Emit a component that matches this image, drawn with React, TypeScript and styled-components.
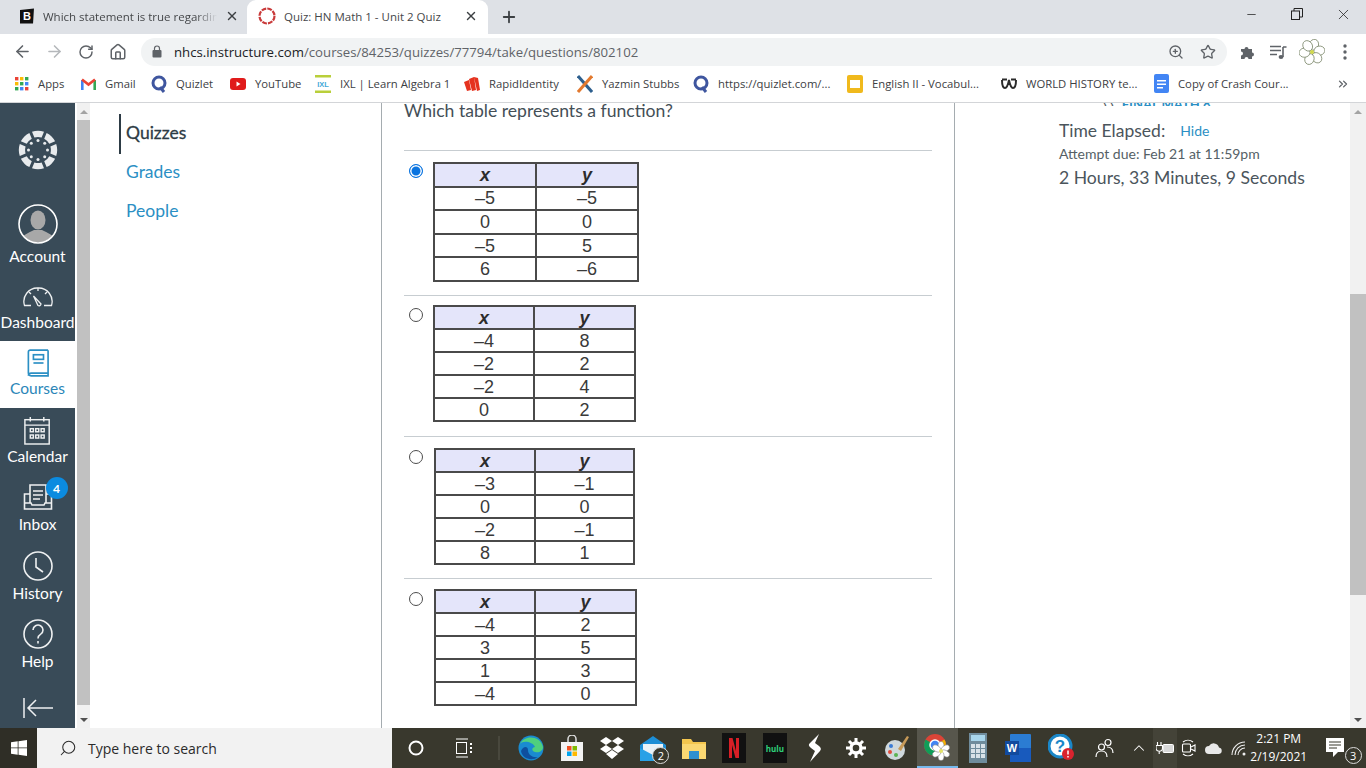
import styled, { createGlobalStyle } from "styled-components"
import { ArrowLeft, ArrowRight, RotateCw, Home, Plus, X, Minus, ZoomIn, Star, Search, ChevronUp, ChevronsRight } from "lucide-react"

const GlobalStyle = createGlobalStyle`
  html, body { margin: 0; padding: 0; width: 1366px; height: 768px; overflow: hidden; background: #fff; }
  * { box-sizing: border-box; }
`

const Page = styled.div`
  width: 1366px;
  height: 768px;
  display: flex;
  flex-direction: column;
  font-family: "Lato", "Open Sans", sans-serif;
  overflow: hidden;
`

/* browser chrome */
const TabStrip = styled.div`
  height: 34px;
  background: #dee1e6;
  display: flex;
  align-items: stretch;
  padding-left: 8px;
  font-family: "Open Sans", "Noto Sans", sans-serif;
`
const Tab = styled.div<{ $active?: boolean; $w: number }>`
  width: ${p => p.$w}px;
  display: flex;
  align-items: center;
  padding: 0 0 2px 11px;
  background: ${p => (p.$active ? "#fff" : "transparent")};
  border-radius: 9px 9px 0 0;
`
const TabTitle = styled.span<{ $w: number; $fade?: boolean }>`
  width: ${p => p.$w}px;
  margin-left: 8px;
  font-size: 11.5px;
  color: #45474a;
  white-space: nowrap;
  overflow: hidden;
  ${p => p.$fade && "-webkit-mask-image: linear-gradient(to right, #000 88%, transparent);"}
`
const TabClose = styled.span<{ $ml: number }>`
  margin-left: ${p => p.$ml}px;
  display: flex;
  color: #3c4043;
`
const NewTab = styled.span`
  margin-left: 12px;
  display: flex;
  align-items: center;
  color: #3c4043;
`
const WindowButtons = styled.div`
  margin-left: auto;
  display: flex;
  align-items: flex-start;
  color: #222;
`
const WindowButton = styled.span`
  width: 46px;
  height: 28px;
  display: flex;
  align-items: center;
  justify-content: center;
`

const Toolbar = styled.div`
  height: 35px;
  background: #fff;
  display: flex;
  align-items: center;
  padding-left: 6px;
`
const NavButton = styled.span<{ $off?: boolean }>`
  width: 32px;
  display: flex;
  justify-content: center;
  color: ${p => (p.$off ? "#b5b8bb" : "#5f6368")};
`
const Omnibox = styled.div`
  width: 1086px;
  height: 28px;
  margin-left: 7px;
  border-radius: 14px;
  background: #f1f3f4;
  display: flex;
  align-items: center;
  padding-left: 10px;
  font-family: "Open Sans", "Noto Sans", sans-serif;
  font-size: 13.2px;
  color: #5f6368;
`
const Host = styled.span`
  color: #202124;
  margin-left: 11px;
`
const OmniIcons = styled.span`
  margin-left: auto;
  display: flex;
  gap: 16px;
  padding: 0 11px 0 0;
  color: #5f6368;
`
const ToolIcons = styled.div`
  display: flex;
  align-items: center;
  color: #5f6368;
  margin-left: 13px;
  gap: 14px;
`
const ProfileSlot = styled.span`
  display: flex;
  margin: 0 4px 0 -2px;
`

const Bookmarks = styled.div`
  height: 34px;
  background: #fff;
  display: flex;
  align-items: center;
  padding: 0 0 4px 15px;
  border-bottom: 1px solid #d3d5d8;
  font-family: "Open Sans", "Noto Sans", sans-serif;
  font-size: 11.3px;
  color: #3c4043;
`
const Bookmark = styled.div<{ $w: number }>`
  width: ${p => p.$w}px;
  display: flex;
  align-items: center;
  gap: 9px;
  white-space: nowrap;
  overflow: hidden;
`
const BookmarkMore = styled.span`
  margin-left: auto;
  margin-right: 16px;
  display: flex;
  color: #5f6368;
`

/* canvas page */
const Main = styled.div`
  height: 625px;
  display: flex;
  background: #fff;
  overflow: hidden;
`
const GlobalNav = styled.nav`
  width: 75px;
  background: #394b58;
  display: flex;
  flex-direction: column;
  align-items: center;
  color: #fff;
  font-size: 15.5px;
`
const LogoSlot = styled.div`
  height: 99px;
  width: 100%;
  display: flex;
  justify-content: center;
  padding-top: 27px;
`
const NavItem = styled.div<{ $h: number; $pt: number; $active?: boolean }>`
  width: 100%;
  height: ${p => p.$h}px;
  display: flex;
  flex-direction: column;
  align-items: center;
  background: ${p => (p.$active ? "#fff" : "transparent")};
  color: ${p => (p.$active ? "#2b86b8" : "#fff")};
  padding-top: ${p => p.$pt}px;
  white-space: nowrap;
`
const NavIcon = styled.div<{ $h: number }>`
  position: relative;
  height: ${p => p.$h}px;
  display: flex;
  align-items: center;
  justify-content: center;
`
const NavLabel = styled.span`
  line-height: 20px;
`
const Badge = styled.span`
  position: absolute;
  top: -3px;
  right: -15px;
  width: 22px;
  height: 22px;
  border-radius: 50%;
  background: #0b8be0;
  color: #fff;
  font-size: 12px;
  font-weight: 700;
  display: flex;
  align-items: center;
  justify-content: center;
`
const Collapse = styled.div`
  margin-top: auto;
  height: 41px;
  display: flex;
  align-items: center;
`
const Scrollbar = styled.div<{ $w: number; $ml?: number }>`
  width: ${p => p.$w}px;
  margin-left: ${p => p.$ml ?? 0}px;
  flex: none;
  background: #f1f1f1;
  display: flex;
  flex-direction: column;
  align-items: center;
`
const ScrollArrow = styled.div<{ $down?: boolean }>`
  height: 17px;
  display: flex;
  align-items: center;
  &::after {
    content: "";
    border-left: 4px solid transparent;
    border-right: 4px solid transparent;
    ${p => (p.$down ? "border-top: 4px solid #505050;" : "border-bottom: 4px solid #a3a3a3;")}
  }
`
const ScrollTrack = styled.div`
  flex: 1;
  width: 100%;
  display: flex;
  flex-direction: column;
`
const ScrollThumb = styled.div<{ $before: number; $h: number }>`
  margin-top: ${p => p.$before}px;
  height: ${p => p.$h}px;
  background: #c1c1c1;
`

const CourseNav = styled.aside`
  width: 291px;
  flex: none;
  padding: 11px 0 0 29px;
  font-size: 17.5px;
`
const CourseLink = styled.div<{ $current?: boolean }>`
  height: ${p => (p.$current ? 40 : 39)}px;
  display: flex;
  align-items: center;
  padding: 0 0 4px 5px;
  border-left: 2px solid ${p => (p.$current ? "#2d3b45" : "transparent")};
  color: ${p => (p.$current ? "#2d3b45" : "#2b8fc4")};
  -webkit-text-stroke: ${p => (p.$current ? "0.3px" : "0")};
`
const Content = styled.main`
  width: 574px;
  flex: none;
  border-left: 1px solid #a5acb0;
  border-right: 1px solid #a5acb0;
  padding: 0 22px;
`
const Question = styled.div`
  height: 48px;
  font-size: 17.6px;
  line-height: 15px;
  color: #444f57;
  border-bottom: 1px solid #c7cdd1;
`
const Answer = styled.div<{ $rule?: boolean; $top: number; $bottom: number }>`
  display: flex;
  align-items: flex-start;
  padding: ${p => p.$top}px 0 ${p => p.$bottom}px 5px;
  border-top: ${p => (p.$rule ? "1px solid #c7cdd1" : "0")};
`
const Radio = styled.input<{ $nudge: number }>`
  appearance: none;
  margin: ${p => p.$nudge}px 10px 0 0;
  width: 14px;
  height: 14px;
  border-radius: 50%;
  border: 1px solid #4d4d4d;
  background: #fff;
  flex: none;
  &:checked {
    border: 1.5px solid #0a74e0;
    background: #0a74e0;
    box-shadow: inset 0 0 0 1.5px #fff;
  }
`
const ValueTable = styled.table<{ $w: number; $h: number; $ml: number }>`
  width: ${p => p.$w}px;
  height: ${p => p.$h}px;
  margin-left: ${p => p.$ml}px;
  border-collapse: collapse;
  table-layout: fixed;
  font-family: "Liberation Sans", Arial, sans-serif;
  font-size: 18px;
  color: #3a3a3a;
  border: 2px solid #4a4a4a;
`
const HeadCell = styled.th<{ $w?: number }>`
  width: ${p => (p.$w ? `${p.$w}px` : "auto")};
  background: #e4e5fa;
  border: 2px solid #4a4a4a;
  padding: 0;
  font-style: italic;
  font-weight: 700;
  line-height: 18px;
  color: #2c2c2c;
`
const ValueCell = styled.td`
  border: 2px solid #4a4a4a;
  padding: 0;
  text-align: center;
  line-height: 18px;
`

const SidePanel = styled.aside`
  flex: 1;
  padding-left: 104px;
  color: #4b555c;
`
const ClippedLine = styled.div`
  height: 3px;
  padding-left: 44px;
  overflow: hidden;
  display: flex;
  align-items: flex-end;
  gap: 8px;
  color: #2b8fc4;
  font-size: 13px;
  font-weight: 700;
  line-height: 3px;
  white-space: nowrap;
`
const ClippedMark = styled.span`
  color: #555f66;
`
const TimeRow = styled.div`
  margin-top: 13px;
  height: 22px;
  display: flex;
  align-items: center;
  font-size: 17.5px;
`
const HideLink = styled.span`
  margin-left: 15px;
  font-size: 14px;
  color: #2b8fc4;
`
const DueLine = styled.div`
  margin-top: 3px;
  font-size: 14px;
  line-height: 20px;
  color: #555f66;
`
const Elapsed = styled.div`
  margin-top: 2px;
  font-size: 17.6px;
  line-height: 24px;
`

/* windows taskbar */
const Taskbar = styled.div`
  height: 40px;
  background: #39382d;
  display: flex;
  align-items: center;
  font-family: "Open Sans", "Noto Sans", sans-serif;
  color: #fff;
`
const StartSlot = styled.div`
  width: 37px;
  height: 100%;
  display: flex;
  align-items: center;
  justify-content: center;
  background: #2f2e26;
`
const SearchBox = styled.div`
  width: 355px;
  height: 100%;
  background: #f2f2f2;
  color: #2b2b2b;
  font-size: 14px;
  display: flex;
  align-items: center;
  gap: 11px;
  padding-left: 22px;
`
const Slot = styled.div<{ $w: number; $active?: boolean; $tint?: boolean }>`
  position: relative;
  width: ${p => p.$w}px;
  height: 100%;
  flex: none;
  display: flex;
  align-items: center;
  justify-content: center;
  background: ${p => (p.$active ? "#57564c" : p.$tint ? "#444338" : "transparent")};
  border-bottom: ${p => (p.$active ? "2px solid #76b9ed" : "0")};
`
const CountBubble = styled.span`
  position: absolute;
  right: 4px;
  bottom: 4px;
  width: 17px;
  height: 17px;
  border-radius: 50%;
  border: 1px solid #ddd;
  background: #39382d;
  font-size: 11px;
  display: flex;
  align-items: center;
  justify-content: center;
`
const Clock = styled.div`
  width: 54px;
  text-align: center;
  font-size: 12px;
  line-height: 18px;
  white-space: nowrap;
  display: flex;
  flex-direction: column;
  align-items: center;
`

const CanvasLogo = () => (
  <svg width="40" height="40" viewBox="-20 -20 40 40">
    {[0, 45, 90, 135, 180, 225, 270, 315].map(a => (
      <path key={a} d="M-6 -18.200A19 19 0 0 1 6 -18.200L3.600 -12.400A13 13 0 0 0 -3.600 -12.400Z" fill="#e8ebed" transform={`rotate(${a})`} />
    ))}
    {[0, 45, 90, 135, 180, 225, 270, 315].map(a => (
      <circle key={a} r="1.500" cx={9.500 * Math.cos((a * Math.PI) / 180)} cy={9.500 * Math.sin((a * Math.PI) / 180)} fill="#e8ebed" />
    ))}
  </svg>
)
const Avatar = () => (
  <svg width="40" height="40" viewBox="0 0 40 40">
    <clipPath id="av"><circle cx="20" cy="20" r="18.500" /></clipPath>
    <circle cx="20" cy="20" r="19" fill="#394b58" />
    <g clipPath="url(#av)" fill="#a8a8a8">
      <ellipse cx="20" cy="16" rx="7.500" ry="9.500" />
      <path d="M2 40c0-9 9-11 14-14h8c5 3 14 5 14 14z" />
    </g>
    <circle cx="20" cy="20" r="19" fill="none" stroke="#fff" strokeWidth="1.600" />
  </svg>
)
const Gauge = () => (
  <svg width="30" height="20" viewBox="0 0 30 20" fill="none" stroke="#eef0f1" strokeWidth="1.300">
    <path d="M8 18.500H1.500A13.500 13.500 0 0 1 15 1a13.500 13.500 0 0 1 13.500 17.500H21" />
    <path d="M10.500 9l4.500 9.500a2 2 0 0 0 3-1.500z" />
    <path d="M15 1v3M6 5l2 2M24 5l-2 2" />
  </svg>
)
const Book = () => (
  <svg width="22" height="28" viewBox="0 0 24 30" fill="none" stroke="#2b8fc4" strokeWidth="1.800">
    <path d="M23 1H3.500A2 2 0 0 0 1.500 3v23a3 3 0 0 0 3 3H23v-3H5M23 1v25H4.500a3 3 0 0 0-3 3" />
    <rect x="7" y="6" width="11" height="5" />
    <path d="M7 15h11" />
  </svg>
)
const CalendarIcon = () => (
  <svg width="27" height="31" viewBox="0 0 30 32" fill="none" stroke="#eef0f1" strokeWidth="1.600">
    <rect x="1" y="4" width="27" height="27" />
    <path d="M1 10h27M7 1v5M22 1v5" />
    {[7, 13, 19].map(x => [14, 21].map(y => <rect key={`${x}${y}`} x={x} y={y} width="3.400" height="3.400" />))}
  </svg>
)
const InboxIcon = () => (
  <svg width="30" height="28" viewBox="0 0 30 28" fill="none" stroke="#eef0f1" strokeWidth="1.600">
    <path d="M7 20V2h16v18M10 8h10M10 12h10M10 16h7" />
    <path d="M7 11H1.500v15h27V11H23M1.500 20H8l1 2h12l1-2h6.500" />
  </svg>
)
const ClockIcon = () => (
  <svg width="30" height="30" viewBox="0 0 30 30" fill="none" stroke="#eef0f1" strokeWidth="1.600">
    <circle cx="15" cy="15" r="14" />
    <path d="M13 7v9l7 5" />
  </svg>
)
const HelpIcon = () => (
  <svg width="30" height="30" viewBox="0 0 30 30" fill="none" stroke="#eef0f1" strokeWidth="1.600">
    <circle cx="15" cy="15" r="14" />
    <path d="M10 11a5 5 0 1 1 7.500 4.400c-1.700 1-2.500 1.800-2.500 4" />
    <path d="M15 22v2.500" />
  </svg>
)
const CollapseIcon = () => (
  <svg width="32" height="22" viewBox="0 0 32 22" fill="none" stroke="#eef0f1" strokeWidth="1.500">
    <path d="M2 1v20M31 11H6M14 3l-8 8 8 8" />
  </svg>
)

const BrainlyIcon = () => (
  <svg width="16" height="16" viewBox="0 0 16 16">
    <path d="M1 2l14-1.500-1 15H1z" fill="#111" />
    <text x="8" y="12" textAnchor="middle" fontSize="11" fontWeight="700" fill="#fff" fontFamily="Liberation Sans">B</text>
  </svg>
)
const CanvasTabIcon = () => (
  <svg width="18" height="18" viewBox="0 0 18 18">
    <circle cx="9" cy="9" r="7.500" fill="none" stroke="#c93a3a" strokeWidth="2.200" strokeDasharray="4.800 1.100" />
  </svg>
)
const LockIcon = () => (
  <svg width="12" height="13" viewBox="0 0 12 13" fill="#5f6368">
    <rect x="1.500" y="5" width="9" height="7.500" rx="1" />
    <path d="M3.500 5V3.500a2.500 2.500 0 0 1 5 0V5" fill="none" stroke="#5f6368" strokeWidth="1.200" />
  </svg>
)
const PuzzleIcon = () => (
  <svg width="16" height="16" viewBox="0 0 16 16" fill="#5f6368">
    <path d="M1 5h3.500a2 2 0 1 1 4 0H12v3.500a2 2 0 1 1 0 4V15H8.500a2 2 0 1 0-4 0H1v-3.500a2 2 0 1 0 0-4z" />
  </svg>
)
const QueueIcon = () => (
  <svg width="17" height="16" viewBox="0 0 17 16" fill="none" stroke="#5f6368" strokeWidth="1.600">
    <path d="M0 2.500h11M0 6.500h11M0 10.500h7" />
    <path d="M13 3v10M13 3h3.500" />
    <ellipse cx="11" cy="13" rx="2.400" ry="2" fill="#5f6368" stroke="none" />
  </svg>
)
const Flower = ({ size = 26 }: { size?: number }) => (
  <svg width={size} height={size} viewBox="-13 -13 26 26">
    {[15, 80, 140, 200, 265, 325].map(a => (
      <ellipse key={a} cx="0" cy="-7.500" rx="4.600" ry="5.500" fill="#fff" stroke="#6d7a5a" strokeWidth="0.700" transform={`rotate(${a})`} />
    ))}
    <circle r="2" fill="#d0d84a" />
  </svg>
)
const Kebab = () => (
  <svg width="4" height="16" viewBox="0 0 4 16" fill="#5f6368">
    <circle cx="2" cy="2" r="1.700" /><circle cx="2" cy="8" r="1.700" /><circle cx="2" cy="14" r="1.700" />
  </svg>
)

const AppsIcon = () => (
  <svg width="14" height="14" viewBox="0 0 14 14">
    {[0, 5, 10].map((x, i) => [0, 5, 10].map((y, j) => (
      <rect key={`${x}${y}`} x={x} y={y} width="3.400" height="3.400" fill={["#ea4335", "#fbbc05", "#34a853", "#4285f4"][(i + j) % 4]} />
    )))}
  </svg>
)
const GmailIcon = () => (
  <svg width="15" height="12" viewBox="0 0 15 12" fill="none">
    <path d="M1.300 12V2" stroke="#4285f4" strokeWidth="2.600" />
    <path d="M13.700 12V2" stroke="#34a853" strokeWidth="2.600" />
    <path d="M1 1.500l6.500 5 6.500-5" stroke="#ea4335" strokeWidth="2.600" />
  </svg>
)
const QuizletIcon = () => (
  <svg width="16" height="18" viewBox="0 0 16 18" fill="none" stroke="#3f569f" strokeWidth="3">
    <circle cx="8" cy="8" r="6" />
    <path d="M9 12l4 5" />
  </svg>
)
const YoutubeIcon = () => (
  <svg width="16" height="12" viewBox="0 0 16 12">
    <rect width="16" height="12" rx="3" fill="#e01b1b" />
    <path d="M6.500 3.500v5l4-2.500z" fill="#fff" />
  </svg>
)
const IxlIcon = () => (
  <svg width="16" height="18" viewBox="0 0 16 18">
    <path d="M0 0h16v2.500H0zM0 15.500h16V18H0z" fill="#b9cf3a" />
    <text x="8" y="11.500" textAnchor="middle" fontSize="7.500" fontWeight="700" fill="#44a9d8" fontFamily="Liberation Sans">IXL</text>
  </svg>
)
const RapidIcon = () => (
  <svg width="16" height="16" viewBox="0 0 16 16" fill="#e5331f">
    <path d="M0 6l5-2 2 10-4 1zM5 3l5-2 2 13-4 1zM10 1l4 1 2 12-3 1z" />
  </svg>
)
const CrossIcon = () => (
  <svg width="16" height="18" viewBox="0 0 16 18" fill="none" strokeWidth="3">
    <path d="M1 1l14 16" stroke="#2d5f8e" />
    <path d="M15 1L1 17" stroke="#e2792f" />
  </svg>
)
const SlidesIcon = () => (
  <svg width="16" height="18" viewBox="0 0 16 18">
    <rect width="16" height="18" rx="2" fill="#f0b91c" />
    <rect x="3" y="5" width="10" height="8" fill="#fff" />
  </svg>
)
const WeeblyIcon = () => (
  <svg width="16" height="12" viewBox="0 0 16 12" fill="none" stroke="#2b2b2b" strokeWidth="2">
    <path d="M1 2c0 6 1 8 3 8s3-3 4-8c1 5 2 8 4 8s3-2 3-8M1 1.500h5M10 1.500h5" />
  </svg>
)
const DocsIcon = () => (
  <svg width="15" height="19" viewBox="0 0 15 19">
    <rect width="15" height="19" rx="2" fill="#4285f4" />
    <path d="M3 6h9v1.500H3zM3 9.500h9V11H3zM3 13h6v1.500H3z" fill="#fff" />
  </svg>
)

const WindowsLogo = () => (
  <svg width="16" height="16" viewBox="0 0 16 16" fill="#fff">
    <path d="M0 2.300l6.700-1V7.500H0zM7.500 1.200L16 0v7.500H7.500zM0 8.300h6.700v6.400l-6.700-1zM7.500 8.300H16V16l-8.500-1.200z" />
  </svg>
)
const TaskView = () => (
  <svg width="16" height="20" viewBox="0 0 16 20" fill="none" stroke="#fff" strokeWidth="1">
    <path d="M0 1h12M0 19h12" />
    <rect x="0.500" y="4.500" width="10" height="11" />
    <path d="M15 5v2M15 9v2M15 13v2" strokeWidth="2" />
  </svg>
)
const EdgeIcon = () => (
  <svg width="26" height="26" viewBox="0 0 26 26">
    <circle cx="13" cy="13" r="12.500" fill="#1a8bd0" />
    <path d="M2 9C6 0 22 0 25 12c0 4-4 6-8 5s-3-5 0-5C15 7 5 5 2 9z" fill="#4fd07e" />
    <path d="M10 15c0 5 5 8 10 7-7 5-16 1-17-6 2-5 7-5 7-1z" fill="#0e4f9e" />
  </svg>
)
const StoreIcon = () => (
  <svg width="22" height="26" viewBox="0 0 22 26">
    <path d="M7 7V4a4 4 0 0 1 8 0v3" fill="none" stroke="#ddd" strokeWidth="1.500" />
    <rect y="7" width="22" height="19" fill="#f3f3f3" />
    <rect x="6" y="11" width="4.500" height="4.500" fill="#f25022" />
    <rect x="11.500" y="11" width="4.500" height="4.500" fill="#7fba00" />
    <rect x="6" y="16.500" width="4.500" height="4.500" fill="#00a4ef" />
    <rect x="11.500" y="16.500" width="4.500" height="4.500" fill="#ffb900" />
  </svg>
)
const DropboxIcon = () => (
  <svg width="24" height="22" viewBox="0 0 24 22" fill="#fff">
    <path d="M6 0l6 4-6 4-6-4zM18 0l6 4-6 4-6-4zM6 8l6 4-6 4-6-4zM18 8l6 4-6 4-6-4zM12 13l6 4-6 5-6-5z" />
  </svg>
)
const MailIcon = () => (
  <svg width="26" height="26" viewBox="0 0 26 26">
    <path d="M0 10L13 1l13 9v16H0z" fill="#1d8ed6" />
    <path d="M3 9h20v7l-10 6-10-6z" fill="#e9f2f8" />
    <path d="M0 13l13 7 13-7v13H0z" fill="#29a1e6" />
  </svg>
)
const FolderIcon = () => (
  <svg width="24" height="22" viewBox="0 0 24 22">
    <path d="M0 2h9l2 3h13v17H0z" fill="#f4c64e" />
    <rect y="7" width="24" height="15" fill="#fbd872" />
    <rect x="7" y="14" width="10" height="8" fill="#2f90d0" />
  </svg>
)
const NetflixTile = () => (
  <svg width="24" height="30" viewBox="0 0 24 30">
    <rect width="24" height="30" fill="#111" />
    <path d="M7 5h3.500L14 18V5h3v20h-3.500L10 12v13H7z" fill="#d81f26" />
  </svg>
)
const HuluTile = styled.span`
  width: 24px;
  height: 30px;
  background: #111;
  color: #2fd07a;
  font-size: 8px;
  font-weight: 700;
  display: flex;
  align-items: center;
  justify-content: center;
`
const BoltIcon = () => (
  <svg width="14" height="28" viewBox="0 0 14 28" fill="#fff">
    <path d="M11 0L2 9c-2 2-1 3 1 5l4 3-5 11 10-11c1.500-2 1-3-1-5L7 9z" />
  </svg>
)
const GearIcon = () => (
  <svg width="20" height="20" viewBox="0 0 20 20" fill="none" stroke="#fff">
    <circle cx="10" cy="10" r="5" strokeWidth="3.400" />
    <path d="M10 0v4M10 16v4M0 10h4M16 10h4M3 3l3 3M14 14l3 3M17 3l-3 3M6 14l-3 3" strokeWidth="3" />
  </svg>
)
const PaletteIcon = () => (
  <svg width="26" height="26" viewBox="0 0 26 26">
    <ellipse cx="11" cy="15" rx="10" ry="10" fill="#cfd8dc" />
    <circle cx="7" cy="11" r="2" fill="#3a7bd5" />
    <circle cx="6" cy="17" r="2" fill="#e24b3a" />
    <circle cx="12" cy="20" r="2" fill="#59b353" />
    <path d="M14 14L23 1l2 1-8 14z" fill="#c79a58" />
  </svg>
)
const ChromeFlower = () => (
  <svg width="28" height="28" viewBox="0 0 28 28">
    <circle cx="12" cy="12" r="11" fill="#db4437" />
    <path d="M12 12L2.500 6.500A11 11 0 0 0 12 23z" fill="#0f9d58" />
    <path d="M12 12l9.500-5.500A11 11 0 0 1 12 23z" fill="#f4b400" />
    <circle cx="12" cy="12" r="5" fill="#4285f4" stroke="#fff" strokeWidth="1.500" />
    <g transform="translate(18 18)">
      {[0, 60, 120, 180, 240, 300].map(a => (
        <ellipse key={a} cy="-5" rx="3" ry="4.500" fill="#fff" stroke="#777" strokeWidth="0.500" transform={`rotate(${a})`} />
      ))}
      <circle r="2" fill="#e4e36a" />
    </g>
  </svg>
)
const CalcIcon = () => (
  <svg width="18" height="30" viewBox="0 0 18 30">
    <rect width="18" height="30" fill="#6f8c9c" />
    <rect x="2" y="2" width="14" height="6" fill="#a8d6ec" />
    {[2, 7, 12].map(x => [11, 16, 21].map(y => <rect key={`${x}${y}`} x={x} y={y} width="4" height="4" fill="#d8e2e8" />))}
  </svg>
)
const WordIcon = () => (
  <svg width="26" height="30" viewBox="0 0 26 30">
    <rect x="5" y="1" width="21" height="28" rx="1" fill="#2b7cd3" />
    <rect x="5" y="15" width="21" height="14" fill="#185abd" />
    <rect y="8" width="14" height="14" fill="#124a9e" />
    <text x="7" y="19" textAnchor="middle" fontSize="11" fontWeight="700" fill="#fff" fontFamily="Liberation Sans">W</text>
  </svg>
)
const HelpBadge = () => (
  <svg width="28" height="28" viewBox="0 0 28 28">
    <circle cx="12" cy="12" r="11" fill="#fff" stroke="#1a87c9" strokeWidth="3" />
    <text x="12" y="18" textAnchor="middle" fontSize="17" fontWeight="700" fill="#1a87c9" fontFamily="Liberation Sans">?</text>
    <circle cx="20" cy="20" r="6" fill="#d9232e" />
    <path d="M20 16.500v4M20 22v1.500" stroke="#fff" strokeWidth="1.500" />
  </svg>
)
const PeopleIcon = () => (
  <svg width="20" height="20" viewBox="0 0 20 20" fill="none" stroke="#fff" strokeWidth="1.200">
    <circle cx="6.500" cy="9" r="3" /><path d="M1 19c0-4 2-6 5.500-6s5.500 2 5.500 6" />
    <circle cx="13" cy="4.500" r="3" /><path d="M12 9c4 0 6 2 6 6" />
  </svg>
)
const BatteryPlug = () => (
  <svg width="18" height="14" viewBox="0 0 18 14" fill="none" stroke="#fff">
    <path d="M1.500 1v3.500M5 1v3.500M0 4.500h6.500V7a3 3 0 0 1-6.500 0zM3.200 10v3" strokeWidth="1.100" />
    <rect x="7" y="3.500" width="10.500" height="8" rx="1" fill="#d8d8d8" />
  </svg>
)
const CamTray = () => (
  <svg width="16" height="20" viewBox="0 0 16 20" fill="none" stroke="#fff" strokeWidth="1.100">
    <path d="M2 4a8 8 0 0 1 10 0M2 16a8 8 0 0 0 10 0" />
    <rect x="1.500" y="6" width="8" height="8" rx="1" />
    <path d="M10 9l4-2v6l-4-2" />
  </svg>
)
const CloudTray = () => (
  <svg width="18" height="12" viewBox="0 0 18 12" fill="#e8e8e8">
    <path d="M4 12a4 4 0 0 1 0-8 5.500 5.500 0 0 1 10 1.500A3.300 3.300 0 0 1 14 12z" />
  </svg>
)
const WifiTray = () => (
  <svg width="16" height="16" viewBox="0 0 16 16" fill="none" stroke="#eee" strokeWidth="1.100">
    <path d="M1 15A13 13 0 0 1 14 2M4 15A10 10 0 0 1 14 5M7 15a7 7 0 0 1 7-7" />
    <circle cx="13" cy="14" r="1.500" fill="#eee" stroke="none" />
  </svg>
)
const NoteIcon = () => (
  <svg width="20" height="20" viewBox="0 0 20 20" fill="#fff">
    <path d="M0 0h18v14h-6l-5 5v-5H0z" />
    <path d="M3 4h12M3 7h12M3 10h8" stroke="#39382d" />
  </svg>
)

type TableRow = [string, string]

const tables: { w: number; h: number; split: number; ml: number; top: number; bottom: number; nudge: number; rows: TableRow[] }[] = [
  { w: 206, h: 120, split: 102, ml: 0, top: 11, bottom: 13, nudge: 2, rows: [["–5", "–5"], ["0", "0"], ["–5", "5"], ["6", "–6"]] },
  { w: 203, h: 117, split: 100, ml: 0, top: 9, bottom: 14, nudge: 3, rows: [["–4", "8"], ["–2", "2"], ["–2", "4"], ["0", "2"]] },
  { w: 201, h: 117, split: 100, ml: 1, top: 11, bottom: 13, nudge: 2, rows: [["–3", "–1"], ["0", "0"], ["–2", "–1"], ["8", "1"]] },
  { w: 203, h: 117, split: 100, ml: 1, top: 10, bottom: 14, nudge: 3, rows: [["–4", "2"], ["3", "5"], ["1", "3"], ["–4", "0"]] },
]

const bookmarks = [
  { w: 66, icon: <AppsIcon />, label: "Apps" },
  { w: 70, icon: <GmailIcon />, label: "Gmail" },
  { w: 79, icon: <QuizletIcon />, label: "Quizlet" },
  { w: 85, icon: <YoutubeIcon />, label: "YouTube" },
  { w: 149, icon: <IxlIcon />, label: "IXL | Learn Algebra 1" },
  { w: 113, icon: <RapidIcon />, label: "RapidIdentity" },
  { w: 116, icon: <CrossIcon />, label: "Yazmin Stubbs" },
  { w: 154, icon: <QuizletIcon />, label: "https://quizlet.com/..." },
  { w: 154, icon: <SlidesIcon />, label: "English II - Vocabul..." },
  { w: 153, icon: <WeeblyIcon />, label: "WORLD HISTORY te..." },
  { w: 135, icon: <DocsIcon />, label: "Copy of Crash Cour..." },
]

const taskApps = [
  <EdgeIcon />, <StoreIcon />, <DropboxIcon />, <MailIcon />, <FolderIcon />, <NetflixTile />,
  <HuluTile>hulu</HuluTile>, <BoltIcon />, <GearIcon />, <PaletteIcon />, <ChromeFlower />, <CalcIcon />, <WordIcon />,
]

export default function App() {
  return (
    <Page>
      <GlobalStyle />
      <TabStrip>
        <Tab $w={239}>
          <BrainlyIcon />
          <TabTitle $w={174} $fade>Which statement is true regarding</TabTitle>
          <TabClose $ml={8}><X size={14} strokeWidth={2.4} /></TabClose>
        </Tab>
        <Tab $w={241} $active>
          <CanvasTabIcon />
          <TabTitle $w={166}>Quiz: HN Math 1 - Unit 2 Quiz</TabTitle>
          <TabClose $ml={14}><X size={14} strokeWidth={2.4} /></TabClose>
        </Tab>
        <NewTab><Plus size={18} strokeWidth={2.4} /></NewTab>
        <WindowButtons>
          <WindowButton><Minus size={13} strokeWidth={1.4} /></WindowButton>
          <WindowButton>
            <svg width="12" height="12" viewBox="0 0 12 12" fill="none" stroke="#222">
              <rect x="0.500" y="3" width="8" height="8.500" />
              <path d="M3 3V0.500h8.500V9H8.500" />
            </svg>
          </WindowButton>
          <WindowButton><X size={17} strokeWidth={1.1} /></WindowButton>
        </WindowButtons>
      </TabStrip>

      <Toolbar>
        <NavButton><ArrowLeft size={19} strokeWidth={2} /></NavButton>
        <NavButton $off><ArrowRight size={19} strokeWidth={2} /></NavButton>
        <NavButton><RotateCw size={16} strokeWidth={2.2} /></NavButton>
        <NavButton><Home size={18} strokeWidth={2} /></NavButton>
        <Omnibox>
          <LockIcon />
          <Host>nhcs.instructure.com</Host>/courses/84253/quizzes/77794/take/questions/802102
          <OmniIcons>
            <ZoomIn size={16} strokeWidth={2} />
            <Star size={16} strokeWidth={2} />
          </OmniIcons>
        </Omnibox>
        <ToolIcons>
          <PuzzleIcon />
          <QueueIcon />
          <ProfileSlot><Flower /></ProfileSlot>
          <Kebab />
        </ToolIcons>
      </Toolbar>

      <Bookmarks>
        {bookmarks.map(b => (
          <Bookmark key={b.label} $w={b.w}>{b.icon}{b.label}</Bookmark>
        ))}
        <BookmarkMore><ChevronsRight size={14} strokeWidth={2.2} /></BookmarkMore>
      </Bookmarks>

      <Main>
        <GlobalNav>
          <LogoSlot><CanvasLogo /></LogoSlot>
          <NavItem $h={66} $pt={0}>
            <NavIcon $h={44}><Avatar /></NavIcon>
            <NavLabel>Account</NavLabel>
          </NavItem>
          <NavItem $h={73} $pt={14}>
            <NavIcon $h={30}><Gauge /></NavIcon>
            <NavLabel>Dashboard</NavLabel>
          </NavItem>
          <NavItem $h={67} $pt={7} $active>
            <NavIcon $h={30}><Book /></NavIcon>
            <NavLabel>Courses</NavLabel>
          </NavItem>
          <NavItem $h={68} $pt={6}>
            <NavIcon $h={32}><CalendarIcon /></NavIcon>
            <NavLabel>Calendar</NavLabel>
          </NavItem>
          <NavItem $h={69} $pt={4}>
            <NavIcon $h={34}><InboxIcon /><Badge>4</Badge></NavIcon>
            <NavLabel>Inbox</NavLabel>
          </NavItem>
          <NavItem $h={68} $pt={4}>
            <NavIcon $h={34}><ClockIcon /></NavIcon>
            <NavLabel>History</NavLabel>
          </NavItem>
          <NavItem $h={68} $pt={4}>
            <NavIcon $h={34}><HelpIcon /></NavIcon>
            <NavLabel>Help</NavLabel>
          </NavItem>
          <Collapse><CollapseIcon /></Collapse>
        </GlobalNav>

        <Scrollbar $w={13} $ml={2}>
          <ScrollArrow />
          <ScrollTrack><ScrollThumb $before={0} $h={585} /></ScrollTrack>
          <ScrollArrow $down />
        </Scrollbar>

        <CourseNav>
          <CourseLink $current>Quizzes</CourseLink>
          <CourseLink>Grades</CourseLink>
          <CourseLink>People</CourseLink>
        </CourseNav>

        <Content>
          <Question>Which table represents a function?</Question>
          {tables.map((t, i) => (
            <Answer key={i} $rule={i > 0} $top={t.top} $bottom={t.bottom}>
              <Radio type="radio" name="answer" $nudge={t.nudge} defaultChecked={i === 0} />
              <ValueTable $w={t.w} $h={t.h} $ml={t.ml}>
                <tbody>
                  <tr>
                    <HeadCell $w={t.split}>x</HeadCell>
                    <HeadCell>y</HeadCell>
                  </tr>
                  {t.rows.map((r, j) => (
                    <tr key={j}>
                      <ValueCell>{r[0]}</ValueCell>
                      <ValueCell>{r[1]}</ValueCell>
                    </tr>
                  ))}
                </tbody>
              </ValueTable>
            </Answer>
          ))}
        </Content>

        <SidePanel>
          <ClippedLine><ClippedMark>› ›</ClippedMark>FINAL MATH 8</ClippedLine>
          <TimeRow>Time Elapsed:<HideLink>Hide</HideLink></TimeRow>
          <DueLine>Attempt due: Feb 21 at 11:59pm</DueLine>
          <Elapsed>2 Hours, 33 Minutes, 9 Seconds</Elapsed>
        </SidePanel>

        <Scrollbar $w={16}>
          <ScrollArrow />
          <ScrollTrack><ScrollThumb $before={174} $h={301} /></ScrollTrack>
          <ScrollArrow $down />
        </Scrollbar>
      </Main>

      <Taskbar>
        <StartSlot><WindowsLogo /></StartSlot>
        <SearchBox><Search size={18} strokeWidth={1.4} style={{ transform: "scaleX(-1)" }} />Type here to search</SearchBox>
        <Slot $w={48}>
          <svg width="16" height="16" viewBox="0 0 16 16" fill="none" stroke="#fff" strokeWidth="2"><circle cx="8" cy="8" r="6.500" /></svg>
        </Slot>
        <Slot $w={47}><TaskView /></Slot>
        <Slot $w={24}><svg width="2" height="24" viewBox="0 0 2 24"><path d="M1 0v24" stroke="#5a594e" /></svg></Slot>
        {taskApps.map((icon, i) => (
          <Slot key={i} $w={40.6} $active={i === 10}>
            {icon}
            {i === 3 && <CountBubble>2</CountBubble>}
          </Slot>
        ))}
        <Slot $w={46}><HelpBadge /></Slot>
        <Slot $w={40}><PeopleIcon /></Slot>
        <Slot $w={28}><ChevronUp size={18} strokeWidth={1.4} /></Slot>
        <Slot $w={24} $tint><BatteryPlug /></Slot>
        <Slot $w={25}><CamTray /></Slot>
        <Slot $w={24}><CloudTray /></Slot>
        <Slot $w={26}><WifiTray /></Slot>
        <Clock>
          <span>2:21 PM</span>
          <span>2/19/2021</span>
        </Clock>
        <Slot $w={60}>
          <NoteIcon />
          <CountBubble>3</CountBubble>
        </Slot>
      </Taskbar>
    </Page>
  )
}
